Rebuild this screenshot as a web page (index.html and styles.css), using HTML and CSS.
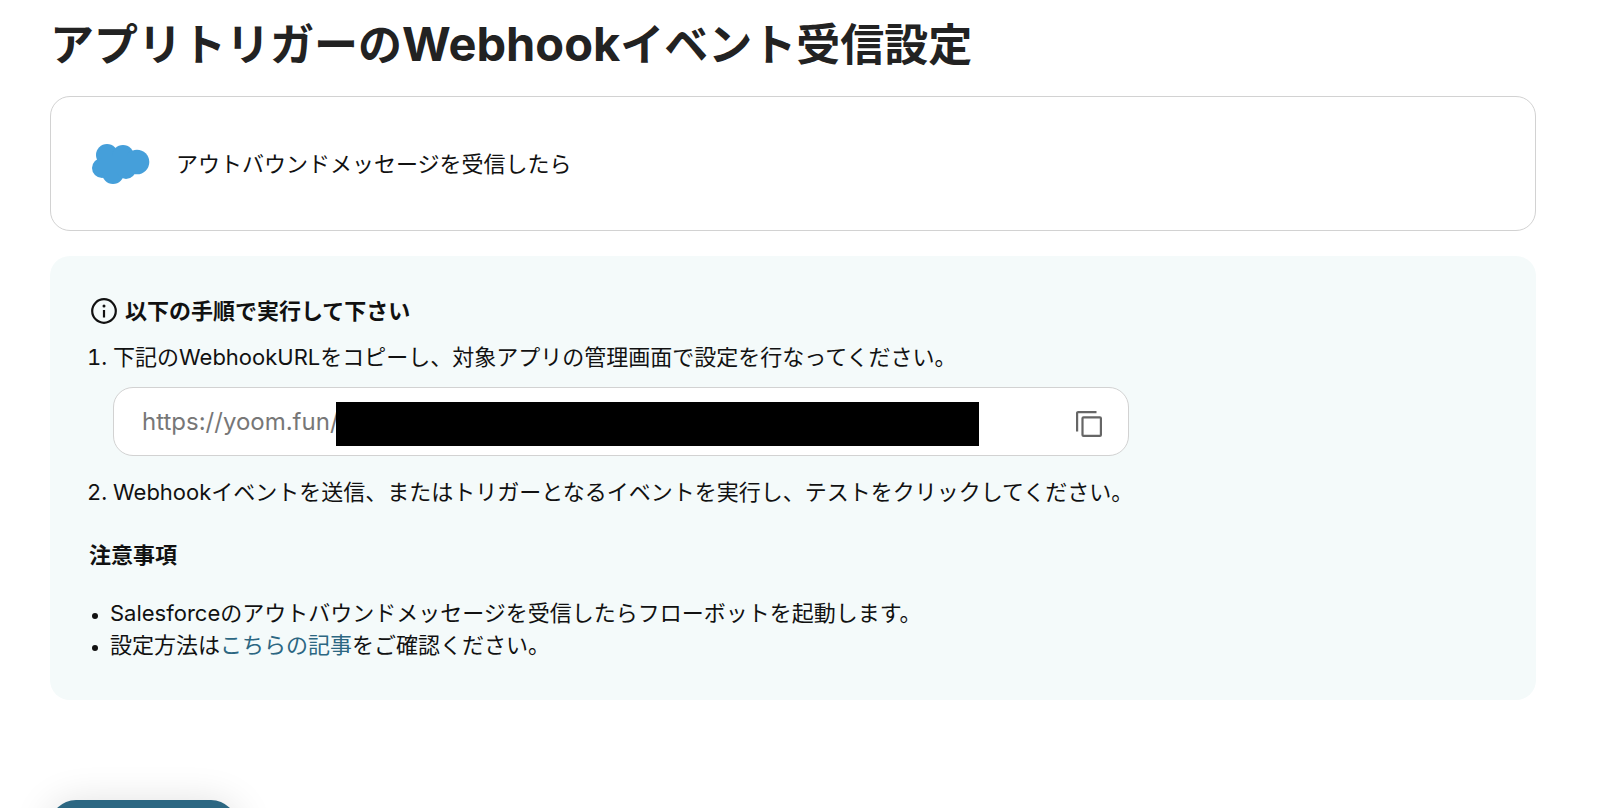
FILE: index.html
```html
<!DOCTYPE html>
<html lang="ja">
<head>
    <meta charset="UTF-8">
    <meta name="viewport" content="width=device-width, initial-scale=1.0">
    <title>アプリトリガーのWebhookイベント受信設定</title>
    <link rel="stylesheet" href="styles.css">
</head>
<body>

    <main class="container">
        <h1>アプリトリガーの<span class="latin">Webhook</span>イベント受信設定</h1>

        <div class="trigger-card">
            <svg class="app-logo" viewBox="0 0 58 40" aria-hidden="true">
                <g fill="#459fda">
                    <circle cx="15" cy="11" r="11"/>
                    <circle cx="31" cy="12" r="11"/>
                    <circle cx="45" cy="18" r="12.3"/>
                    <circle cx="10" cy="24" r="10"/>
                    <circle cx="21" cy="29" r="11"/>
                    <circle cx="34" cy="25" r="10"/>
                    <path d="M10 12h34v16H10z"/>
                </g>
            </svg>
            <span>アウトバウンドメッセージを受信したら</span>
        </div>

        <section class="guide">
            <h2 class="guide-title">
                <svg class="info-icon" viewBox="0 0 26 26" aria-hidden="true">
                    <circle cx="13" cy="13" r="11.8" fill="none" stroke="#111" stroke-width="2.2"/>
                    <path d="M13 12v7.5" stroke="#111" stroke-width="2.2"/>
                    <circle cx="13" cy="8" r="1.5" fill="#111"/>
                </svg>
                以下の手順で実行して下さい
            </h2>

            <ol class="steps">
                <li>
                    <label for="webhook-url">下記のWebhookURLをコピーし、対象アプリの管理画面で設定を行なってください。</label>
                    <div class="url-box">
                        <input type="text" id="webhook-url" value="https://yoom.fun/" readonly>
                        <span class="mask"></span>
                        <button type="button" class="copy-button" aria-label="コピー">
                            <svg viewBox="0 0 26 26" fill="none" stroke="#666" stroke-width="2.2" aria-hidden="true">
                                <path d="M1.1 20.5V2.1a1 1 0 0 1 1-1h18.4"/>
                                <rect x="6.5" y="6.3" width="18.4" height="18.6" rx="1"/>
                            </svg>
                        </button>
                    </div>
                </li>
                <li>Webhookイベントを送信、またはトリガーとなるイベントを実行し、テストをクリックしてください。</li>
            </ol>

            <h3>注意事項</h3>
            <ul class="notes">
                <li>Salesforceのアウトバウンドメッセージを受信したらフローボットを起動します。</li>
                <li>設定方法は<a href="#">こちらの記事</a>をご確認ください。</li>
            </ul>
        </section>

        <button type="button" class="test-button" aria-label="テスト"></button>
    </main>

</body>
</html>
```
FILE: styles.css
```css
* {
    box-sizing: border-box;
}
html {
    height: 100%;
    overflow: hidden;
}
body {
    height: 100%;
    margin: 0;
    overflow-y: auto;
    scrollbar-width: none;
    font-family: Inter, "Noto Sans CJK JP", sans-serif;
    font-size: 22px;
    line-height: 32px;
    color: #111;
    background-color: #fff;
}
.container {
    padding: 13px 64px 40px 50px;
}
h1 {
    margin: 0 0 19px;
    font-size: 44px;
    line-height: 64px;
    font-weight: 700;
    color: #222;
}
.latin {
    font-size: 47px;
    line-height: 1;
}
.trigger-card {
    display: flex;
    align-items: center;
    gap: 26px;
    min-height: 135px;
    padding: 0 41px;
    border: 1px solid #d2d2d2;
    border-radius: 20px;
}
.app-logo {
    width: 58px;
    height: 40px;
}
.guide {
    margin-top: 25px;
    padding: 39px;
    border-radius: 20px;
    background-color: #f4fafa;
}
.guide-title {
    display: flex;
    align-items: center;
    gap: 8px;
    padding-left: 2px;
}
.info-icon {
    width: 26px;
    height: 26px;
}
h2,
h3 {
    margin: 0;
    font-size: 22px;
    line-height: 32px;
    font-weight: 700;
}
.steps {
    margin: 14px 0 0;
    padding-left: 24px;
}
.url-box {
    display: flex;
    align-items: center;
    max-width: 1016px;
    min-height: 69px;
    margin: 14px 0 20px;
    padding: 4px 26px 0 28px;
    border: 1px solid #d2d2d2;
    border-radius: 20px;
    background-color: #fff;
}
.url-box input {
    width: 194px;
    padding: 0 0 4px;
    border: none;
    outline: none;
    background: none;
    font: inherit;
    font-size: 24px;
    color: #777;
}
.mask {
    flex: 0 1 643px;
    height: 44px;
    background-color: #000;
}
.copy-button {
    width: 26px;
    height: 26px;
    margin-left: auto;
    padding: 0;
    border: none;
    background: none;
    cursor: pointer;
}
.copy-button svg {
    display: block;
}
h3 {
    margin-top: 31px;
}
.notes {
    margin: 26px 0 0;
    padding-left: 21px;
}
.notes li::marker {
    font-size: 18px;
}
.notes a {
    color: #2c6782;
    text-decoration: none;
}
.test-button {
    display: block;
    width: 187px;
    height: 64px;
    margin-top: 100px;
    border: none;
    border-radius: 26px;
    background-color: #2c6782;
    box-shadow: 0 4px 40px rgba(0, 0, 0, 0.14);
    cursor: pointer;
}
```
